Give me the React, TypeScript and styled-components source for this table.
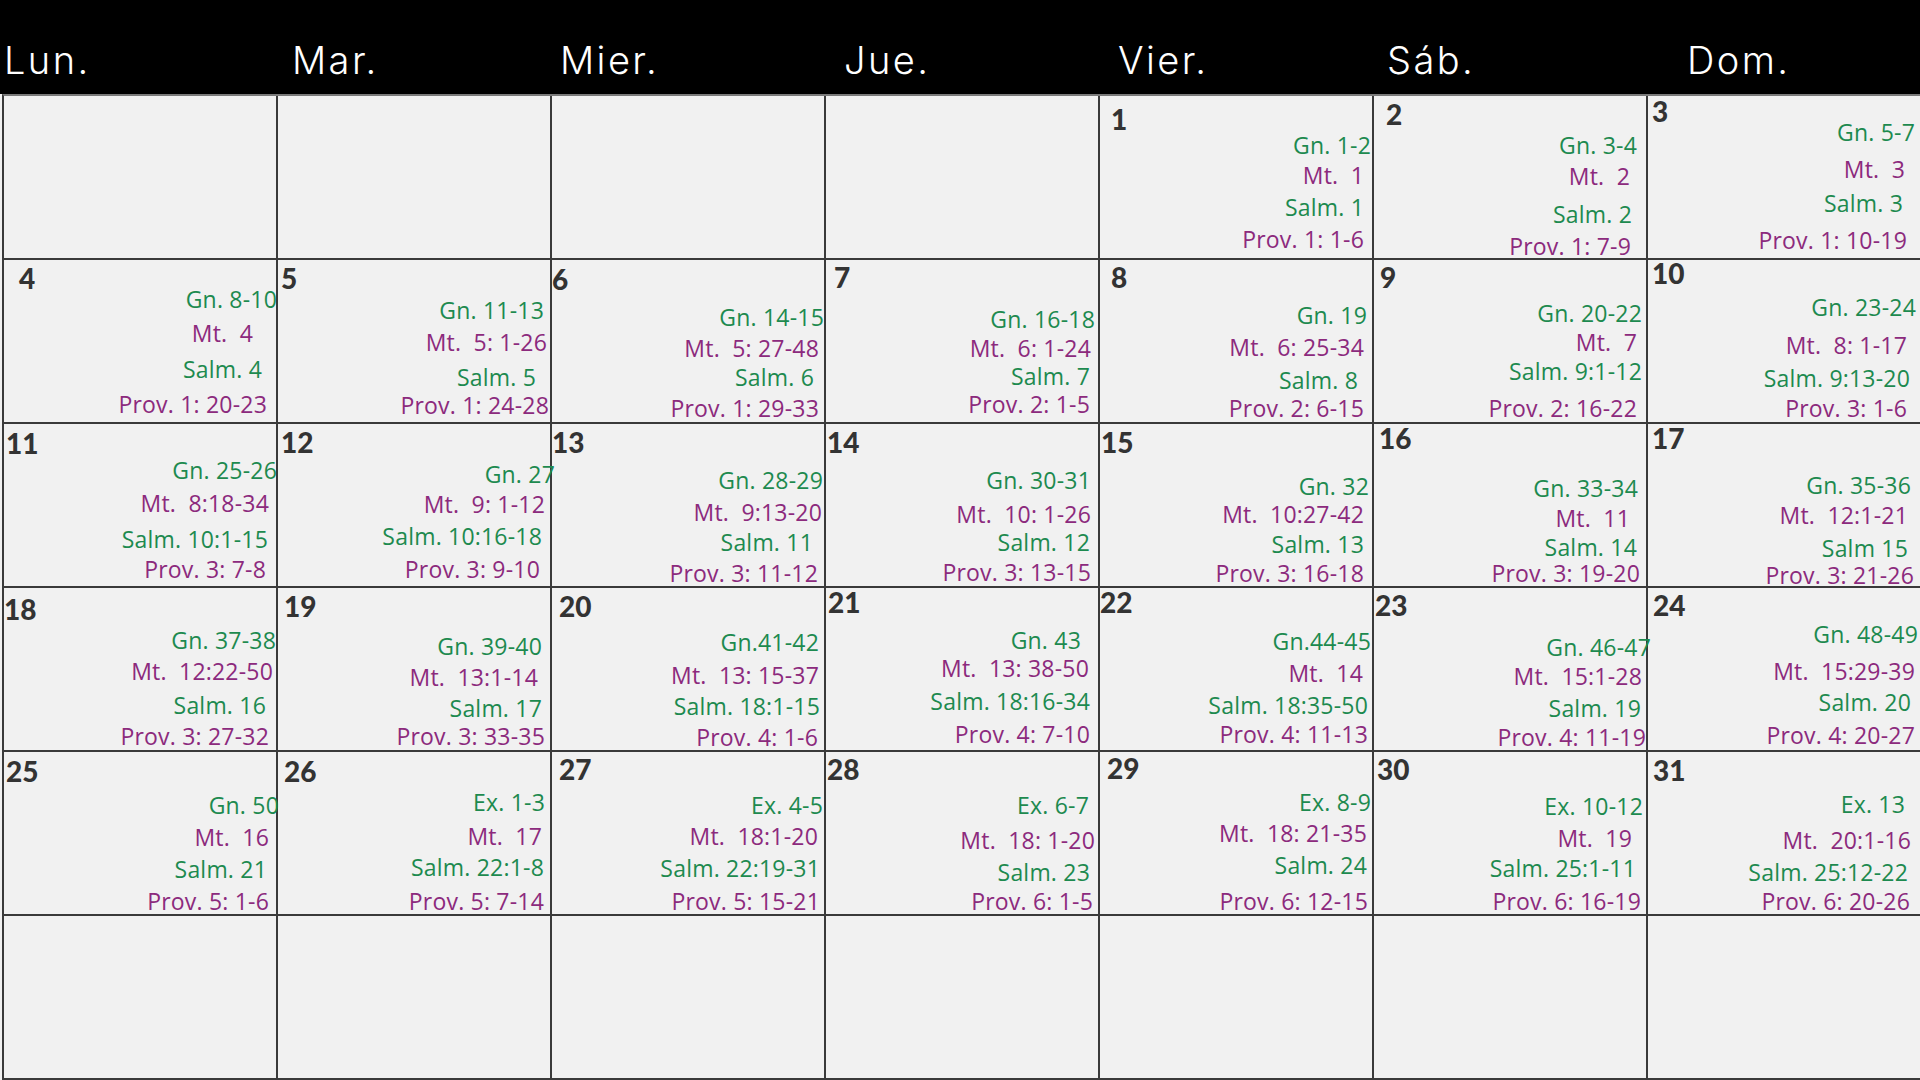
import React from "react";
import styled, { createGlobalStyle } from "styled-components";

const S = 1920 / 1568;
const COL_START = [4, 278, 552, 826, 1100, 1374, 1648];
const COL_END = [276, 550, 824, 1098, 1372, 1646, 1920];
const ROW_TOP = (r: number) => 96 + 164 * r;
const NUM_H = 30;
const LINE_H = 24;

type Line = [string, number, number];
type Day = { c: number; n: number; nx: number; ny: number; lines: Line[] };

const WEEKS: Day[][] = [
  [
    { c: 4, n: 1, nx: 908, ny: 97, lines: [["Gn. 1-2", 1120, 118], ["Mt.  1", 1114, 143], ["Salm. 1", 1114, 169], ["Prov. 1: 1-6", 1114, 195]] },
    { c: 5, n: 2, nx: 1133, ny: 93, lines: [["Gn. 3-4", 1337, 118], ["Mt.  2", 1331, 144], ["Salm. 2", 1333, 175], ["Prov. 1: 7-9", 1332, 201]] },
    { c: 6, n: 3, nx: 1350, ny: 91, lines: [["Gn. 5-7", 1564, 108], ["Mt.  3", 1556, 138], ["Salm. 3", 1554, 166], ["Prov. 1: 10-19", 1557, 196]] },
  ],
  [
    { c: 0, n: 4, nx: 16, ny: 227, lines: [["Gn. 8-10", 226, 244], ["Mt.  4", 207, 272], ["Salm. 4", 214, 301], ["Prov. 1: 20-23", 218, 330]] },
    { c: 1, n: 5, nx: 230, ny: 227, lines: [["Gn. 11-13", 444, 253], ["Mt.  5: 1-26", 447, 279], ["Salm. 5", 438, 308], ["Prov. 1: 24-28", 448, 331]] },
    { c: 2, n: 6, nx: 452, ny: 228, lines: [["Gn. 14-15", 673, 259], ["Mt.  5: 27-48", 669, 284], ["Salm. 6", 665, 308], ["Prov. 1: 29-33", 669, 333]] },
    { c: 3, n: 7, nx: 682, ny: 226, lines: [["Gn. 16-18", 894, 260], ["Mt.  6: 1-24", 891, 284], ["Salm. 7", 890, 307], ["Prov. 2: 1-5", 890, 330]] },
    { c: 4, n: 8, nx: 908, ny: 226, lines: [["Gn. 19", 1116, 257], ["Mt.  6: 25-34", 1114, 283], ["Salm. 8", 1109, 310], ["Prov. 2: 6-15", 1114, 333]] },
    { c: 5, n: 9, nx: 1128, ny: 226, lines: [["Gn. 20-22", 1341, 255], ["Mt.  7", 1337, 279], ["Salm. 9:1-12", 1341, 303], ["Prov. 2: 16-22", 1337, 333]] },
    { c: 6, n: 10, nx: 1350, ny: 223, lines: [["Gn. 23-24", 1565, 251], ["Mt.  8: 1-17", 1557, 282], ["Salm. 9:13-20", 1560, 309], ["Prov. 3: 1-6", 1557, 333]] },
  ],
  [
    { c: 0, n: 11, nx: 6, ny: 362, lines: [["Gn. 25-26", 226, 384], ["Mt.  8:18-34", 220, 411], ["Salm. 10:1-15", 219, 440], ["Prov. 3: 7-8", 217, 465]] },
    { c: 1, n: 12, nx: 230, ny: 361, lines: [["Gn. 27", 453, 387], ["Mt.  9: 1-12", 445, 412], ["Salm. 10:16-18", 443, 438], ["Prov. 3: 9-10", 441, 465]] },
    { c: 2, n: 13, nx: 452, ny: 361, lines: [["Gn. 28-29", 672, 392], ["Mt.  9:13-20", 671, 418], ["Salm. 11", 664, 443], ["Prov. 3: 11-12", 668, 468]] },
    { c: 3, n: 14, nx: 676, ny: 361, lines: [["Gn. 30-31", 891, 392], ["Mt.  10: 1-26", 891, 420], ["Salm. 12", 890, 443], ["Prov. 3: 13-15", 891, 467]] },
    { c: 4, n: 15, nx: 900, ny: 361, lines: [["Gn. 32", 1118, 397], ["Mt.  10:27-42", 1114, 420], ["Salm. 13", 1114, 444], ["Prov. 3: 16-18", 1114, 468]] },
    { c: 5, n: 16, nx: 1127, ny: 358, lines: [["Gn. 33-34", 1338, 399], ["Mt.  11", 1331, 423], ["Salm. 14", 1337, 447], ["Prov. 3: 19-20", 1339, 468]] },
    { c: 6, n: 17, nx: 1350, ny: 358, lines: [["Gn. 35-36", 1561, 396], ["Mt.  12:1-21", 1558, 421], ["Salm 15", 1558, 448], ["Prov. 3: 21-26", 1563, 470]] },
  ],
  [
    { c: 0, n: 18, nx: 4, ny: 497, lines: [["Gn. 37-38", 225, 522], ["Mt.  12:22-50", 223, 548], ["Salm. 16", 217, 575], ["Prov. 3: 27-32", 220, 601]] },
    { c: 1, n: 19, nx: 233, ny: 495, lines: [["Gn. 39-40", 443, 528], ["Mt.  13:1-14", 439, 553], ["Salm. 17", 443, 578], ["Prov. 3: 33-35", 445, 601]] },
    { c: 2, n: 20, nx: 457, ny: 495, lines: [["Gn.41-42", 669, 524], ["Mt.  13: 15-37", 669, 551], ["Salm. 18:1-15", 670, 577], ["Prov. 4: 1-6", 668, 602]] },
    { c: 3, n: 21, nx: 677, ny: 492, lines: [["Gn. 43", 883, 523], ["Mt.  13: 38-50", 889, 546], ["Salm. 18:16-34", 890, 573], ["Prov. 4: 7-10", 890, 600]] },
    { c: 4, n: 22, nx: 899, ny: 492, lines: [["Gn.44-45", 1120, 524], ["Mt.  14", 1113, 550], ["Salm. 18:35-50", 1117, 576], ["Prov. 4: 11-13", 1117, 600]] },
    { c: 5, n: 23, nx: 1124, ny: 494, lines: [["Gn. 46-47", 1348, 528], ["Mt.  15:1-28", 1341, 552], ["Salm. 19", 1340, 578], ["Prov. 4: 11-19", 1344, 602]] },
    { c: 6, n: 24, nx: 1351, ny: 494, lines: [["Gn. 48-49", 1566, 518], ["Mt.  15:29-39", 1564, 548], ["Salm. 20", 1561, 573], ["Prov. 4: 20-27", 1564, 600]] },
  ],
  [
    { c: 0, n: 25, nx: 6, ny: 630, lines: [["Gn. 50", 228, 658], ["Mt.  16", 220, 684], ["Salm. 21", 218, 710], ["Prov. 5: 1-6", 220, 736]] },
    { c: 1, n: 26, nx: 233, ny: 630, lines: [["Ex. 1-3", 445, 655], ["Mt.  17", 443, 683], ["Salm. 22:1-8", 444, 708], ["Prov. 5: 7-14", 444, 736]] },
    { c: 2, n: 27, nx: 457, ny: 628, lines: [["Ex. 4-5", 672, 657], ["Mt.  18:1-20", 668, 683], ["Salm. 22:19-31", 670, 709], ["Prov. 5: 15-21", 670, 736]] },
    { c: 3, n: 28, nx: 676, ny: 628, lines: [["Ex. 6-7", 889, 657], ["Mt.  18: 1-20", 894, 686], ["Salm. 23", 890, 712], ["Prov. 6: 1-5", 893, 736]] },
    { c: 4, n: 29, nx: 905, ny: 627, lines: [["Ex. 8-9", 1120, 655], ["Mt.  18: 21-35", 1116, 680], ["Salm. 24", 1116, 706], ["Prov. 6: 12-15", 1117, 736]] },
    { c: 5, n: 30, nx: 1125, ny: 628, lines: [["Ex. 10-12", 1342, 658], ["Mt.  19", 1333, 684], ["Salm. 25:1-11", 1336, 709], ["Prov. 6: 16-19", 1340, 736]] },
    { c: 6, n: 31, nx: 1351, ny: 629, lines: [["Ex. 13", 1556, 657], ["Mt.  20:1-16", 1561, 686], ["Salm. 25:12-22", 1558, 712], ["Prov. 6: 20-26", 1560, 736]] },
  ],
  [],
];

const HEADERS: { label: string; pad: number }[] = [
  { label: "Lun.", pad: 0 },
  { label: "Mar.", pad: 14 },
  { label: "Mier.", pad: 8 },
  { label: "Jue.", pad: 18 },
  { label: "Vier.", pad: 18 },
  { label: "Sáb.", pad: 13 },
  { label: "Dom.", pad: 39 },
];

const GlobalStyle = createGlobalStyle`
  html, body { margin: 0; padding: 0; background: #f1f1f1; }
  body { width: 1920px; height: 1080px; overflow: hidden; }
`;

const Page = styled.div`
  width: 1920px;
  height: 1080px;
  display: flex;
  flex-direction: column;
  background: #f1f1f1;
  overflow: hidden;
`;

const HeaderBar = styled.div`
  height: 94px;
  flex: none;
  background: #000;
  display: grid;
  grid-template-columns: repeat(6, 274px) 1fr;
  padding-left: 4px;
  box-sizing: border-box;
`;

const HeaderLabel = styled.div<{ $pad: number }>`
  padding-top: 41px;
  padding-left: ${(p) => p.$pad}px;
  font-family: Inter, "Open Sans", sans-serif;
  font-weight: 300;
  font-size: 38px;
  line-height: 38px;
  color: #ffffff;
  letter-spacing: 2.4px;
`;

const Board = styled.div`
  flex: 1;
  margin-left: 2px;
  border-left: 2px solid #3a3a3a;
  border-top: 2px solid #7a7a7a;
  display: grid;
  grid-template-columns: repeat(6, 274px) 1fr;
  grid-template-rows: repeat(6, 164px);
  background: #f1f1f1;
`;

const Cell = styled.div<{ $last: boolean }>`
  box-sizing: border-box;
  display: flex;
  flex-direction: column;
  align-items: flex-end;
  min-width: 0;
  overflow: visible;
  border-right: ${(p) => (p.$last ? "none" : "2px solid #3a3a3a")};
  border-bottom: 2px solid #3a3a3a;
`;

const DayNum = styled.div<{ $ml: number; $mt: number }>`
  align-self: flex-start;
  margin-left: ${(p) => p.$ml}px;
  margin-top: ${(p) => p.$mt}px;
  height: ${NUM_H}px;
  font-family: Lato, "Open Sans", sans-serif;
  font-weight: 900;
  font-size: 28px;
  line-height: ${NUM_H}px;
  color: #333333;
`;

const Reading = styled.div<{ $tone: "green" | "purple"; $mr: number; $mt: number }>`
  margin-right: ${(p) => p.$mr}px;
  margin-top: ${(p) => p.$mt}px;
  height: ${LINE_H}px;
  white-space: pre;
  font-family: "Open Sans", Lato, sans-serif;
  font-weight: 400;
  font-size: 23px;
  line-height: ${LINE_H}px;
  letter-spacing: 0.2px;
  color: ${(p) => (p.$tone === "green" ? "#1d8a4f" : "#8c2a7d")};
`;

function DayCell({ day, row }: { day: Day; row: number }) {
  const top = ROW_TOP(row);
  const start = COL_START[day.c];
  const end = COL_END[day.c];
  const numCenter = day.ny * S;
  const numTop = numCenter - NUM_H / 2;
  let prevBottom = numTop + NUM_H;
  return (
    <Cell $last={day.c === 6}>
      <DayNum $ml={Math.round(day.nx * S - start - 1)} $mt={Math.round(numTop - top)}>
        {day.n}
      </DayNum>
      {day.lines.map(([text, right, yc], i) => {
        const lineTop = yc * S - LINE_H / 2;
        const mt = Math.round(lineTop - prevBottom);
        prevBottom = prevBottom + mt + LINE_H;
        return (
          <Reading
            key={i}
            $tone={i % 2 === 0 ? "green" : "purple"}
            $mr={Math.round(end - right * S)}
            $mt={mt}
          >
            {text}
          </Reading>
        );
      })}
    </Cell>
  );
}

export default function App() {
  return (
    <>
      <GlobalStyle />
      <Page>
        <HeaderBar>
          {HEADERS.map((h) => (
            <HeaderLabel key={h.label} $pad={h.pad}>
              {h.label}
            </HeaderLabel>
          ))}
        </HeaderBar>
        <Board>
          {WEEKS.map((week, r) =>
            Array.from({ length: 7 }, (_, c) => {
              const day = week.find((d) => d.c === c);
              return day ? (
                <DayCell key={`${r}-${c}`} day={day} row={r} />
              ) : (
                <Cell key={`${r}-${c}`} $last={c === 6} />
              );
            })
          )}
        </Board>
      </Page>
    </>
  );
}
